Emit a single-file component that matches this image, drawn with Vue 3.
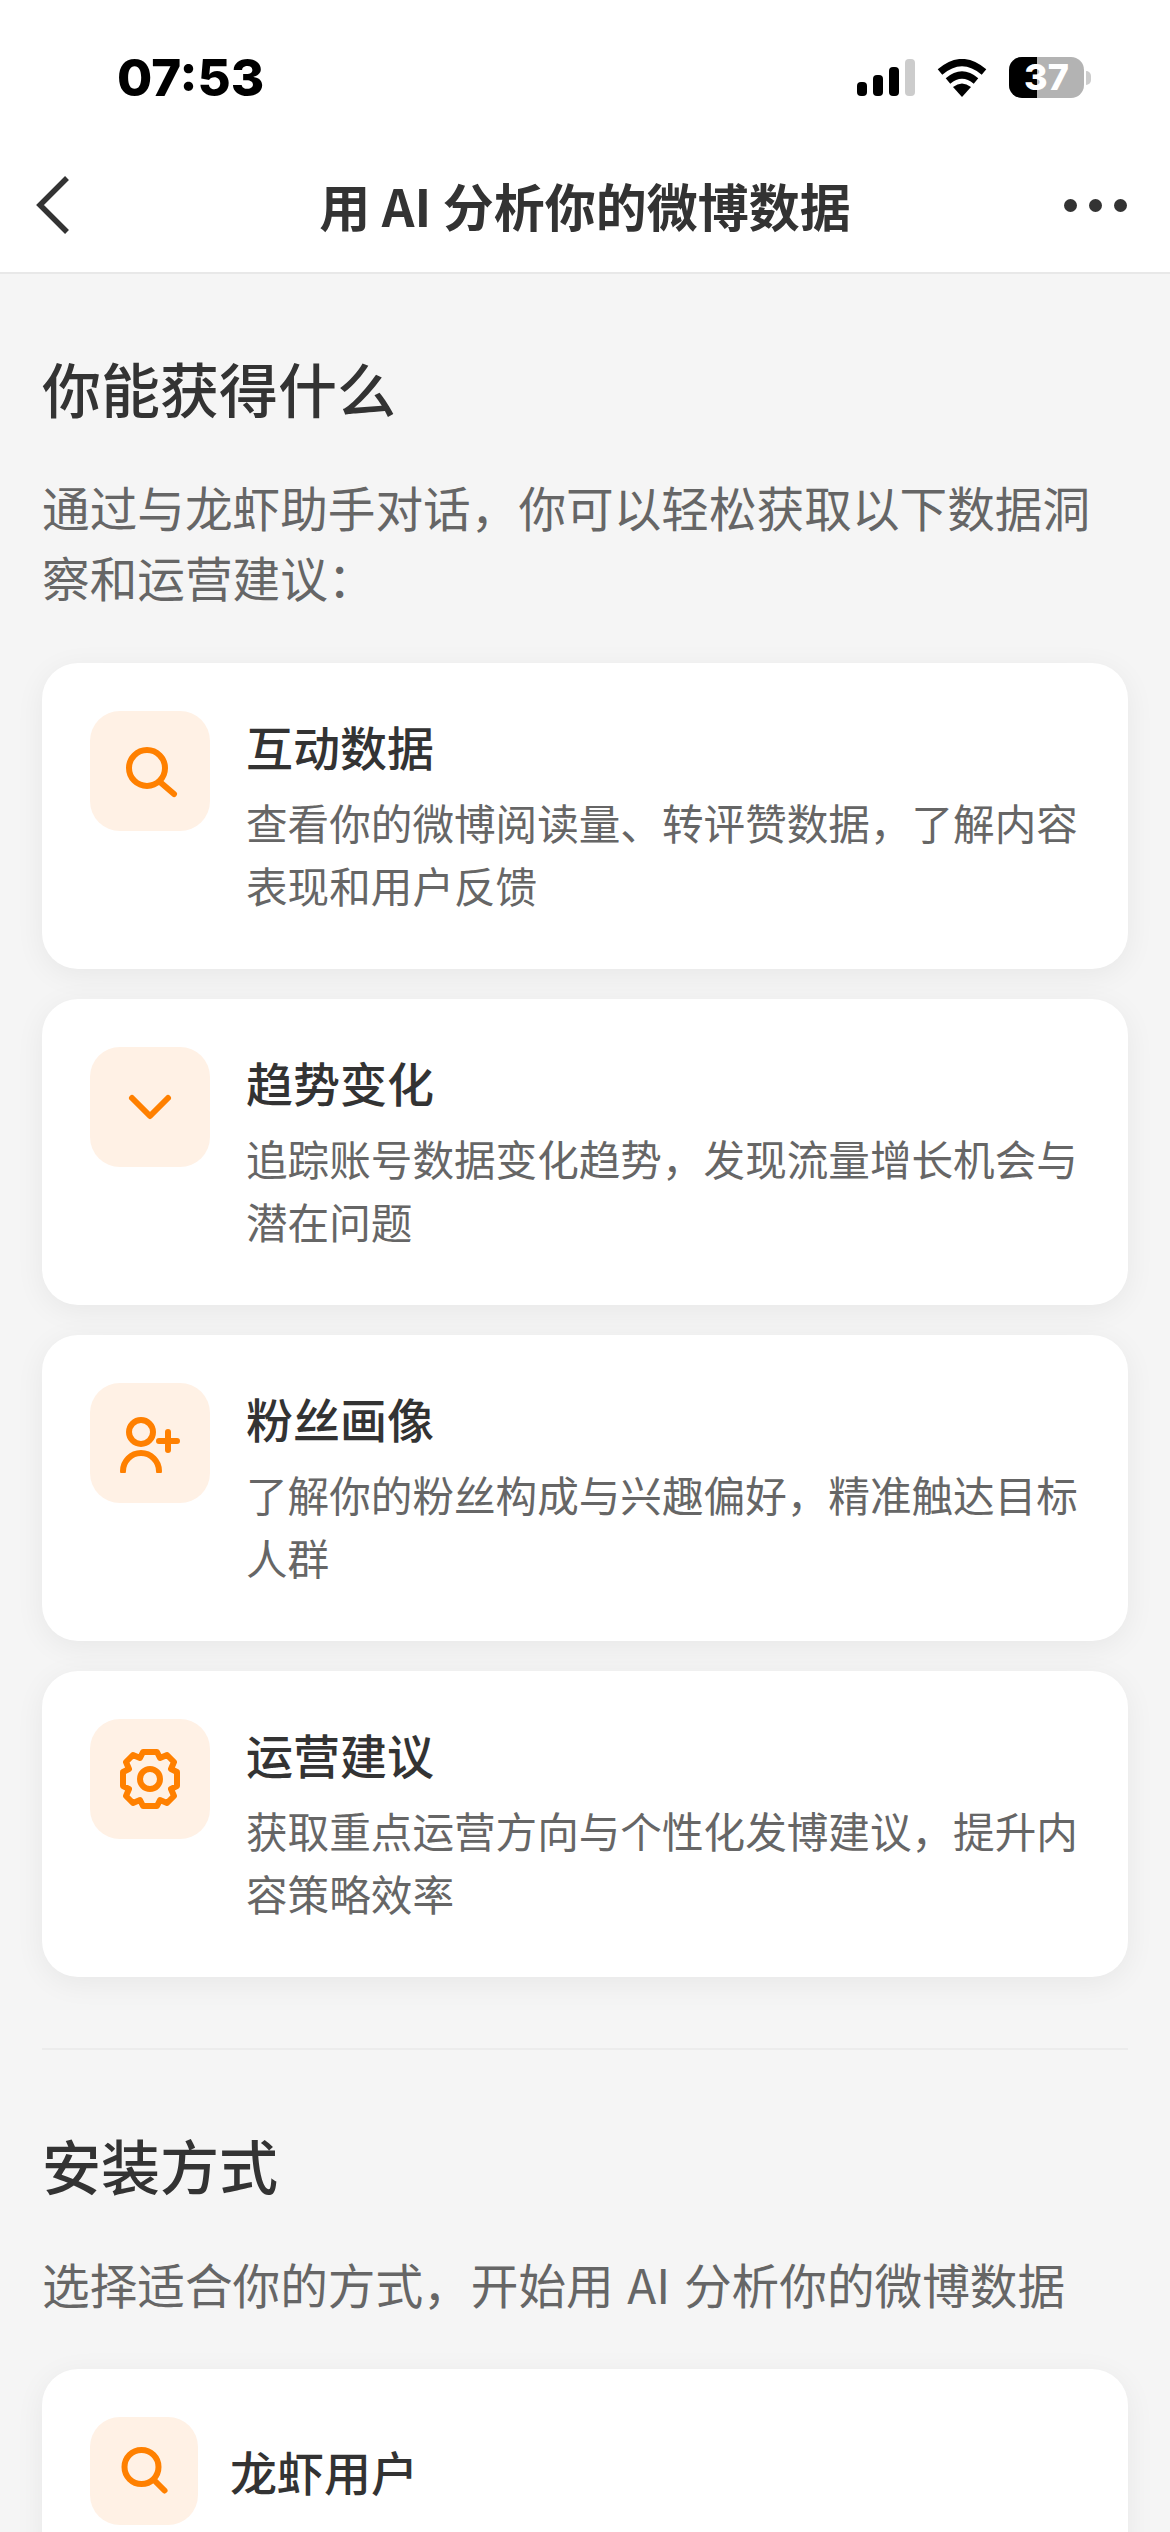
<script setup>
const features = [
  { key: 'search', title: '互动数据', desc: '查看你的微博阅读量、转评赞数据\uFF0C了解内容表现和用户反馈' },
  { key: 'chevron', title: '趋势变化', desc: '追踪账号数据变化趋势\uFF0C发现流量增长机会与潜在问题' },
  { key: 'user', title: '粉丝画像', desc: '了解你的粉丝构成与兴趣偏好\uFF0C精准触达目标人群' },
  { key: 'gear', title: '运营建议', desc: '获取重点运营方向与个性化发博建议\uFF0C提升内容策略效率' },
]
const intro = '通过与龙虾助手对话\uFF0C你可以轻松获取以下数据洞察和运营建议\uFF1A'
const installIntro = '选择适合你的方式\uFF0C开始用 AI 分析你的微博数据'
</script>

<template>
  <div class="page">
    <header class="top">
      <div class="status">
        <span class="time">07:53</span>
        <div class="sys">
          <div class="signal"><i class="b1"></i><i class="b2"></i><i class="b3"></i><i class="b4"></i></div>
          <svg class="wifi" viewBox="0 0 50 38" width="50" height="38">
            <path d="M3 13 Q25 -6 47 13" fill="none" stroke="#000" stroke-width="7" />
            <path d="M11 22 Q25 10 39 22" fill="none" stroke="#000" stroke-width="7" />
            <path d="M16 28 Q25 21 34 28 L25 38 Z" fill="#000" />
          </svg>
          <div class="battery"><span class="level"></span><span class="pct">37</span></div>
          <i class="nub"></i>
        </div>
      </div>
      <nav class="nav">
        <svg class="back" viewBox="0 0 36 58" width="36" height="58">
          <path d="M32 2 L5 29 L32 56" fill="none" stroke="#333" stroke-width="5.5" />
        </svg>
        <h1>用 AI 分析你的微博数据</h1>
        <div class="more"><i></i><i></i><i></i></div>
      </nav>
    </header>

    <main class="content">
      <h2>你能获得什么</h2>
      <p class="sub">{{ intro }}</p>
      <div class="list">
        <article v-for="f in features" :key="f.key" class="card">
          <div class="ico">
            <svg v-if="f.key === 'search'" viewBox="0 0 60 60" width="60" height="60">
              <circle cx="27" cy="27" r="18" class="s" />
              <path d="M40 41 L54 53" class="s" />
            </svg>
            <svg v-else-if="f.key === 'chevron'" viewBox="0 0 60 60" width="60" height="60">
              <path d="M12 21 L30 39 L48 21" class="s" />
            </svg>
            <svg v-else-if="f.key === 'user'" viewBox="0 0 60 60" width="60" height="60">
              <circle cx="21" cy="19" r="12" class="s" />
              <path d="M3 58 A18 18 0 0 1 39 58" class="s" />
              <path d="M39 28 H57 M48 19 V37" class="s" />
            </svg>
            <svg v-else viewBox="0 0 60 60" width="60" height="60">
              <circle cx="30" cy="30" r="10" class="s" />
              <path d="M23 3 H37 L40 9 L47 6 L54 13 L51 20 L57 23 V37 L51 40 L54 47 L47 54 L40 51 L37 57 H23 L20 51 L13 54 L6 47 L9 40 L3 37 V23 L9 20 L6 13 L13 6 L20 9 Z" class="s" />
            </svg>
          </div>
          <div class="body">
            <h3>{{ f.title }}</h3>
            <p>{{ f.desc }}</p>
          </div>
        </article>
      </div>

      <hr class="rule" />

      <h2>安装方式</h2>
      <p class="sub single">{{ installIntro }}</p>
      <article class="card install">
        <div class="ico small">
          <svg viewBox="0 0 60 60" width="60" height="60">
            <circle cx="27.5" cy="26" r="17" class="s" />
            <path d="M40 39 L50.5 49.5" class="s" />
          </svg>
        </div>
        <h3>龙虾用户</h3>
      </article>
    </main>
  </div>
</template>

<style scoped>
.page {
  width: 1170px;
  height: 2532px;
  overflow: hidden;
  background: #f5f5f5;
  font-family: "Noto Sans CJK SC", "Noto Sans", sans-serif;
  color: #333;
}
.top {
  background: #fff;
  height: 274px;
  box-sizing: border-box;
  border-bottom: 2px solid #e8e8e8;
}
.status {
  height: 150px;
  display: flex;
  justify-content: space-between;
  padding: 48px 79px 0 117px;
  box-sizing: border-box;
}
.time {
  font-family: Inter, "Liberation Sans", sans-serif;
  font-weight: 800;
  font-size: 51px;
  line-height: 60px;
  color: #000;
}
.sys {
  display: flex;
  align-items: flex-start;
  margin-top: 9px;
}
.signal {
  display: flex;
  align-items: flex-end;
  gap: 6px;
  height: 37px;
  margin-top: 2px;
  margin-right: 22px;
}
.signal i {
  width: 10px;
  border-radius: 4px;
  background: #000;
}
.b1 { height: 14px; }
.b2 { height: 21px; }
.b3 { height: 29px; }
.signal .b4 { height: 37px; background: #ccc; }
.wifi {
  margin-top: 2px;
  margin-right: 22px;
}
.battery {
  position: relative;
  width: 75px;
  height: 41px;
  border-radius: 13px;
  background: #b3b3b3;
}
.level {
  position: absolute;
  inset: 0 auto 0 0;
  width: 28px;
  background: #000;
  border-radius: 13px 0 0 13px;
}
.pct {
  position: absolute;
  left: 0;
  right: 0;
  top: 0;
  text-align: center;
  font-family: Inter, "Liberation Sans", sans-serif;
  font-weight: 800;
  font-size: 36px;
  line-height: 41px;
  color: #fff;
}
.nub {
  width: 5px;
  height: 14px;
  margin-top: 14px;
  margin-left: 2px;
  background: #ccc;
  border-radius: 0 6px 6px 0;
}
.nav {
  height: 122px;
  display: grid;
  grid-template-columns: 1fr auto 1fr;
  align-items: center;
  padding: 0 39px 12px;
  box-sizing: border-box;
}
.back {
  justify-self: start;
  margin-left: -4px;
}
.nav h1 {
  margin: 0;
  font-size: 51px;
  font-weight: 700;
  line-height: 72px;
  color: #333;
}
.more {
  justify-self: end;
  display: flex;
  gap: 12px;
  margin-right: 4px;
}
.more i {
  width: 13px;
  height: 13px;
  border-radius: 50%;
  background: #333;
}
.content {
  padding: 72px 42px 0;
}
h2 {
  margin: 0;
  font-size: 59px;
  font-weight: 500;
  line-height: 84px;
  color: #333;
}
.sub {
  margin: 42px 0 0;
  font-size: 47.65px;
  word-spacing: 3px;
  line-height: 70px;
  color: #666;
}
.list {
  display: flex;
  flex-direction: column;
  gap: 30px;
  margin-top: 51px;
}
.card {
  display: flex;
  gap: 36px;
  background: #fff;
  border-radius: 36px;
  padding: 48px 48px 52px;
  box-shadow: 0 6px 30px rgba(0, 0, 0, 0.06);
}
.ico {
  flex: none;
  width: 120px;
  height: 120px;
  border-radius: 30px;
  background: #fff1e5;
  display: flex;
  align-items: center;
  justify-content: center;
}
.ico.small {
  width: 108px;
  height: 108px;
}
.s {
  fill: none;
  stroke: #ff8000;
  stroke-width: 6;
  stroke-linecap: round;
  stroke-linejoin: round;
}
.body {
  flex: 1;
  min-width: 0;
}
h3 {
  margin: 0;
  font-size: 47px;
  font-weight: 500;
  line-height: 70px;
  color: #333;
}
.body p {
  margin: 10px 0 0;
  font-size: 41.6px;
  line-height: 63px;
  color: #666;
}
.rule {
  border: 0;
  height: 2px;
  background: #ececec;
  margin: 71px 0 0;
}
.rule + h2 {
  margin-top: 73px;
}
.single {
  margin-top: 42px;
}
.install {
  margin-top: 50px;
  align-items: center;
  gap: 32px;
}
</style>

<style>
html, body { margin: 0; background: #f5f5f5; }
</style>
